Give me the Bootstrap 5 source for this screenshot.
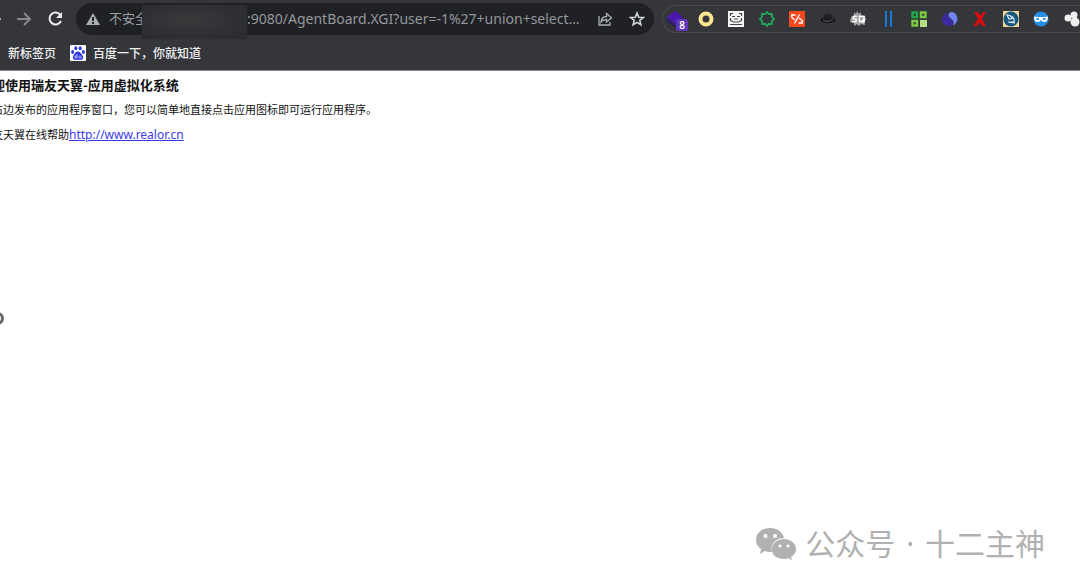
<!DOCTYPE html>
<html lang="zh-CN">
<head>
<meta charset="utf-8">
<meta name="viewport" content="width=device-width, initial-scale=1">
<title>应用虚拟化系统</title>
<link href="https://cdn.jsdelivr.net/npm/bootstrap@5.3.0/dist/css/bootstrap.min.css" rel="stylesheet">
<style>
body{font-family:"Noto Sans","Noto Sans CJK SC",sans-serif;font-size:12px;color:#111;background:#fff}
svg{display:block}
.chrome{background:#35363a;border-bottom:1px solid #85868a}
.toolbar{height:38px;padding-left:16px}
.tool-btn{border:0;background:none;padding:0;color:#9aa0a6;flex:none}
.omnibox{height:32px;margin-left:12px;margin-right:8px;padding:0 9px;background:#202124;border-radius:16px;color:#9aa0a6;font-size:14px}
.security{font-size:13px;width:162px}
.redacted{left:58px;top:2px;width:105px;height:34px;background:radial-gradient(ellipse at 45% 45%,#38393b,#2b2c2f 85%);box-shadow:0 0 1px #2b2c2f}
.url{font-family:"Noto Sans",sans-serif;font-size:14px;color:#93979c;background:none;border:0;padding:0 0 2px;outline:0;min-width:0}
.ext-strip{height:28px;width:418px;border:1px solid #4a4b4f;border-right:0;border-radius:14px 0 0 14px;padding-left:4px}
.ext-strip .tool-btn{width:16px;height:16px}
.ext-count{left:9px;top:8px;width:12px;height:12px;background:#6237b5;color:#fff;font-size:10px;line-height:12px;border-radius:2px;font-weight:600}
.bookmarks{height:32px;padding-left:8px;padding-bottom:2px;gap:14px}
.bookmarks a{color:#f1f2f4;font-size:12px;font-weight:500;gap:7px;font-family:"Noto Sans CJK SC",sans-serif}
.welcome{margin-left:-8px;padding-top:4px;font-family:"Noto Sans CJK SC",sans-serif}
.welcome h1{font-size:13px;line-height:20px;font-weight:700;margin:0 0 4px}
.welcome p{font-size:11px;line-height:20px;margin:0 0 5px}
.welcome a{color:#3a3af0;font-family:"Noto Sans",sans-serif;font-size:12px}
.edge-ring{left:-9px;top:312px;width:13px;height:13px;border:3px solid #666;border-radius:50%}
.watermark{right:35px;bottom:22px;color:#b1b1b1;font-size:30px;line-height:44px;gap:8px}
.dot{margin:0 3px}
</style>
</head>
<body class="position-relative min-vh-100 overflow-hidden">
<header class="chrome">
  <div class="toolbar d-flex align-items-center position-relative">
    <button class="tool-btn position-absolute start-0" aria-label="后退"><svg width="2" height="4"><path d="M0 1h1v2H0z" fill="#aaa"/></svg></button>
    <button class="tool-btn" aria-label="前进"><svg width="16" height="16" fill="none" stroke="#85878b" stroke-width="2"><path d="M1 8h13M8 2l6 6-6 6"/></svg></button>
    <button class="tool-btn ms-3" aria-label="重新加载"><svg width="16" height="16" fill="none" stroke="#eceef0" stroke-width="2"><path d="M12.500 4A6 6 0 1 0 13 10"/><path d="M14 1v6H8z" fill="#eceef0" stroke="none"/></svg></button>
    <div class="omnibox d-flex align-items-center flex-grow-1 position-relative">
      <label class="security d-flex align-items-center text-nowrap" for="url"><svg class="me-2" width="16" height="14"><path d="M8 1l7 12H1z" fill="#aaaeb3"/><path d="M7 5h2v4H7zM7 10h2v2H7z" fill="#202124"/></svg>不安全</label>
      <span class="redacted position-absolute ms-2"></span>
      <input id="url" class="url flex-grow-1" value=":9080/AgentBoard.XGI?user=-1%27+union+select…">
      <button class="tool-btn" aria-label="分享"><svg width="16" height="16" fill="none" stroke="#a9adb2" stroke-width="1.3"><path d="M2 5v9h11v-3M4 11c.4-4 2.5-5.5 5.500-5.500V2.500L14.500 7 9.500 11V8.500C7 8.500 5.500 9 4 11z"/></svg></button>
      <button class="tool-btn ms-3" aria-label="添加书签"><svg width="16" height="16" fill="none" stroke="#d0d3d7" stroke-width="1.6"><path d="M8 2l1.700 4.200 4.600.3-3.500 2.900 1.100 4.400L8 11.400l-3.900 2.400 1.100-4.400L1.700 6.500l4.600-.3z"/></svg></button>
    </div>
    <div class="ext-strip d-flex align-items-center justify-content-between flex-shrink-0">
      <button class="tool-btn position-relative" aria-label="扩展 1"><svg width="16" height="16"><path d="M0 7l8 8 8-8v3l-8 6-8-6z" fill="#28117c"/><path d="M8 0l8 6-8 7-8-7z" fill="#4a16ae"/></svg><span class="ext-count position-absolute">8</span></button>
      <button class="tool-btn" aria-label="扩展 2"><svg width="16" height="16"><circle cx="8" cy="8" r="5.500" fill="none" stroke="#fbe78f" stroke-width="4"/></svg></button>
      <button class="tool-btn" aria-label="扩展 3"><svg width="16" height="16"><path fill="#f5f5f5" d="M0 0h16v16H0z"/><g fill="none" stroke="#444"><path d="M2.500 5V2.500H5M11 2.500h2.500V5M4 5.500h3M9 5.500h3M2.500 7v2.500l3 1.500h5l3-1.500V7M6 8h4M2 13.500h12" stroke-width="1.200"/></g></svg></button>
      <button class="tool-btn" aria-label="扩展 4"><svg width="16" height="16" fill="none" stroke="#22a45a" stroke-width="1.800"><path d="M8 1l1.800 2 3-.2.200 3L15 8l-2 2-.2 3-3-.2L8 15l-1.800-2.200-3 .2-.2-3L1 8l2-2.200-.0-3 3.200.2z"/></svg></button>
      <button class="tool-btn" aria-label="扩展 5"><svg width="16" height="16"><path fill="#f5491d" d="M0 0h16v16H0z"/><path d="M6.500 4H2.800v2.500L6 9M9.500 12h3.700V9.500L10 7M10.500 3.500L5.500 12.500" fill="none" stroke="#fff" stroke-width="1.400"/></svg></button>
      <button class="tool-btn" aria-label="扩展 6"><svg width="16" height="16"><ellipse cx="8" cy="9" rx="7.500" ry="3" fill="#151617"/><path d="M4 8V4q4-2 8 0v4z" fill="#202122"/><path d="M3 9q5 3 10-1" fill="none" stroke="#606165"/></svg></button>
      <button class="tool-btn" aria-label="扩展 7"><svg width="16" height="16"><path d="M4 1l2 2 1-3 2 3 2-2v3l4 1 1 4-2 2 1 3-4-1-2 2-2-2-3 2v-3L0 11l1-5 3-2z" fill="#a5a5a6"/><path d="M7 5.500H3.500v2.500H6v2.500H2M9.500 5.500H14v5H9.500zM12 9l2.500 3" fill="none" stroke="#fff" stroke-width="1.500"/><path d="M7 6.500H4.500M2 9.300h3M10.800 6.500v3" stroke="#77787a" stroke-width=".6"/></svg></button>
      <button class="tool-btn" aria-label="扩展 8"><svg width="16" height="16"><path d="M4 0h2v16H4zM9 0h2v16H9z" fill="#1878db"/></svg></button>
      <button class="tool-btn" aria-label="扩展 9"><svg width="16" height="16" fill="none" stroke-width="2.400"><path d="M1.500 1.500h4.500V6H1.500z" stroke="#1fa64a"/><path d="M10 1.500h4.500V6H10z" stroke="#7ac943"/><path d="M1.500 10h4.500v4.500H1.500z" stroke="#7ac943"/><path d="M9 9h7v7H9z" fill="#b8df87"/></svg></button>
      <button class="tool-btn" aria-label="扩展 10"><svg width="16" height="16"><path d="M5 1C-2 5-1 15 7 15c5 0 5-4 2-6.500C6 6 4 5 5 1z" fill="#3c2ba0"/><path d="M9 1c6 0 8 7 5 11-1 1.500-2 2-3 2 2-4-1-5-3-7C6 5 6 2 9 1z" fill="#7184f8"/></svg></button>
      <button class="tool-btn" aria-label="扩展 11"><svg width="16" height="16"><path d="M2 1h4l2.500 4L11 1h3l-4 7 4 7h-4l-2.500-4L5 15H1l5-7z" fill="#d90d10"/></svg></button>
      <button class="tool-btn" aria-label="扩展 12"><svg width="16" height="16"><path fill="#f1d39b" d="M0 0h16v16H0z"/><circle cx="8" cy="8" r="7.500" fill="#155783"/><path d="M4 4l3 .5 2 3-3 .5zM9 5l2 3v3H6M5 11l7 1" fill="none" stroke="#e9eef1" stroke-width="1.200"/></svg></button>
      <button class="tool-btn" aria-label="扩展 13"><svg width="16" height="16"><circle cx="8" cy="8" r="7.500" fill="#278ee5"/><path d="M1 5.500q7 1 14 0 0 5.500-4 5.500-2 0-3-2-1 2-3 2-4 0-4-5.500z" fill="#fff"/><path d="M3 7h3v2H4zM10 7h3l-1 2h-2z" fill="#278ee5"/></svg></button>
      <button class="tool-btn" aria-label="扩展 14"><svg width="16" height="16" fill="#efefef"><circle cx="4" cy="7" r="3.500"/><circle cx="10" cy="4" r="3.500"/><circle cx="11" cy="11" r="4.500"/></svg></button>
    </div>
  </div>
  <nav class="bookmarks d-flex align-items-center position-relative" aria-label="书签">
    <a href="#" class="text-decoration-none">新标签页</a>
    <a href="#" class="d-flex align-items-center text-decoration-none"><svg width="16" height="16"><rect width="16" height="16" rx="1" fill="#fff"/><g fill="#2c36e0"><ellipse cx="2.600" cy="7" rx="1.500" ry="2"/><ellipse cx="5.800" cy="3.200" rx="1.500" ry="2"/><ellipse cx="10.200" cy="3.200" rx="1.500" ry="2"/><ellipse cx="13.400" cy="7" rx="1.500" ry="2"/><path d="M8 6.500c2 0 3 2 4.500 3.800S13 15 10.500 15c-2 0-3-.3-5 0S2 12.500 3.500 10.300 6 6.500 8 6.500z"/></g><path d="M7 9v4H5v-2h2M9 10.500V13h2v-2.500" fill="none" stroke="#fff" stroke-width=".6"/></svg>百度一下，你就知道</a>
  </nav>
</header>
<main class="welcome text-nowrap">
  <h1>迎使用瑞友天翼-应用虚拟化系统</h1>
  <p>右边发布的应用程序窗口，您可以简单地直接点击应用图标即可运行应用程序。</p>
  <p>友天翼在线帮助<a href="http://www.realor.cn">http://www.realor.cn</a></p>
</main>
<div class="edge-ring position-absolute"></div>
<div class="watermark position-absolute d-flex align-items-center text-nowrap">
  <svg width="42" height="34" viewBox="0 0 42 34"><path d="M15 1C7 1 1 6 1 13c0 4 2 7 5 9l-1 5 5-3c2 1 4 1 7 1C15 17 21 11 29 11 28 5 22 1 15 1z" fill="#b1b1b1"/><path d="M29 12c-7 0-12 4.500-12 10.500S22 32 29 32c2 0 3 0 4-1l4 2-1-3c3-2 5-4 5-8 0-6-6-10-12-10z" fill="#b1b1b1"/><g fill="#fff"><circle cx="10.500" cy="9" r="2"/><circle cx="20" cy="9" r="2"/><circle cx="25" cy="19" r="1.600"/><circle cx="33" cy="19" r="1.600"/></g></svg>
  <span>公众号 <span class="dot">·</span> 十二主神</span>
</div>
<script src="https://cdn.jsdelivr.net/npm/bootstrap@5.3.0/dist/js/bootstrap.bundle.min.js"></script>
</body>
</html>
